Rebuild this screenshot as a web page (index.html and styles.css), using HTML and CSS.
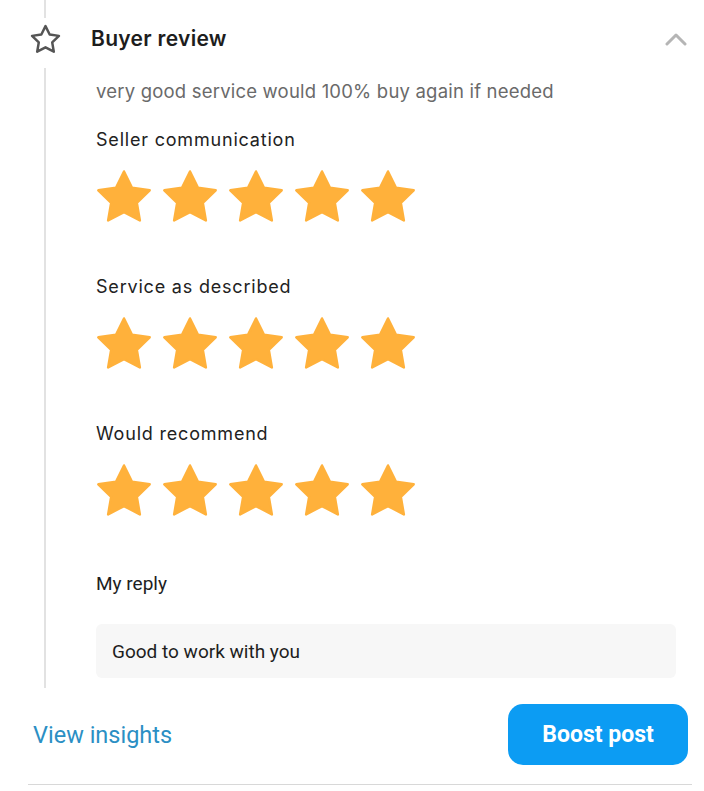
FILE: index.html
```html
<!DOCTYPE html>
<html>
<head>
<meta charset="utf-8">
<link rel="stylesheet" href="styles.css">
</head>
<body>
<div class="card">
  <div class="rail-top"></div>
  <div class="header">
    <svg class="head-icon" viewBox="0 0 24 24" width="35" height="35"><path d="M12 2.8l2.85 5.78 6.38.93-4.62 4.5 1.09 6.35L12 17.36l-5.7 3 1.09-6.35-4.62-4.5 6.38-.93z" fill="none" stroke="#555" stroke-width="1.7" stroke-linejoin="round"/></svg>
    <div class="title">Buyer review</div>
    <svg class="chev" viewBox="0 0 24 14" width="24" height="14"><path d="M3 12l9-9 9 9" fill="none" stroke="#b5b5b5" stroke-width="3" stroke-linecap="round" stroke-linejoin="round"/></svg>
  </div>
  <div class="body">
    <p class="review">very good service would 100% buy again if needed</p>
    <div class="section">
      <div class="label">Seller communication</div>
      <div class="stars">
        <svg viewBox="1.6 1.6 20.8 19.8" width="56" height="53"><path class="st" d="M12 2.5l3 6.1 6.6.95-4.8 4.67 1.14 6.6L12 17.7l-5.94 3.12 1.14-6.6-4.8-4.67 6.6-.95z"/></svg>
        <svg viewBox="1.6 1.6 20.8 19.8" width="56" height="53"><path class="st" d="M12 2.5l3 6.1 6.6.95-4.8 4.67 1.14 6.6L12 17.7l-5.94 3.12 1.14-6.6-4.8-4.67 6.6-.95z"/></svg>
        <svg viewBox="1.6 1.6 20.8 19.8" width="56" height="53"><path class="st" d="M12 2.5l3 6.1 6.6.95-4.8 4.67 1.14 6.6L12 17.7l-5.94 3.12 1.14-6.6-4.8-4.67 6.6-.95z"/></svg>
        <svg viewBox="1.6 1.6 20.8 19.8" width="56" height="53"><path class="st" d="M12 2.5l3 6.1 6.6.95-4.8 4.67 1.14 6.6L12 17.7l-5.94 3.12 1.14-6.6-4.8-4.67 6.6-.95z"/></svg>
        <svg viewBox="1.6 1.6 20.8 19.8" width="56" height="53"><path class="st" d="M12 2.5l3 6.1 6.6.95-4.8 4.67 1.14 6.6L12 17.7l-5.94 3.12 1.14-6.6-4.8-4.67 6.6-.95z"/></svg>
      </div>
    </div>
    <div class="section">
      <div class="label">Service as described</div>
      <div class="stars">
        <svg viewBox="1.6 1.6 20.8 19.8" width="56" height="53"><path class="st" d="M12 2.5l3 6.1 6.6.95-4.8 4.67 1.14 6.6L12 17.7l-5.94 3.12 1.14-6.6-4.8-4.67 6.6-.95z"/></svg>
        <svg viewBox="1.6 1.6 20.8 19.8" width="56" height="53"><path class="st" d="M12 2.5l3 6.1 6.6.95-4.8 4.67 1.14 6.6L12 17.7l-5.94 3.12 1.14-6.6-4.8-4.67 6.6-.95z"/></svg>
        <svg viewBox="1.6 1.6 20.8 19.8" width="56" height="53"><path class="st" d="M12 2.5l3 6.1 6.6.95-4.8 4.67 1.14 6.6L12 17.7l-5.94 3.12 1.14-6.6-4.8-4.67 6.6-.95z"/></svg>
        <svg viewBox="1.6 1.6 20.8 19.8" width="56" height="53"><path class="st" d="M12 2.5l3 6.1 6.6.95-4.8 4.67 1.14 6.6L12 17.7l-5.94 3.12 1.14-6.6-4.8-4.67 6.6-.95z"/></svg>
        <svg viewBox="1.6 1.6 20.8 19.8" width="56" height="53"><path class="st" d="M12 2.5l3 6.1 6.6.95-4.8 4.67 1.14 6.6L12 17.7l-5.94 3.12 1.14-6.6-4.8-4.67 6.6-.95z"/></svg>
      </div>
    </div>
    <div class="section">
      <div class="label">Would recommend</div>
      <div class="stars">
        <svg viewBox="1.6 1.6 20.8 19.8" width="56" height="53"><path class="st" d="M12 2.5l3 6.1 6.6.95-4.8 4.67 1.14 6.6L12 17.7l-5.94 3.12 1.14-6.6-4.8-4.67 6.6-.95z"/></svg>
        <svg viewBox="1.6 1.6 20.8 19.8" width="56" height="53"><path class="st" d="M12 2.5l3 6.1 6.6.95-4.8 4.67 1.14 6.6L12 17.7l-5.94 3.12 1.14-6.6-4.8-4.67 6.6-.95z"/></svg>
        <svg viewBox="1.6 1.6 20.8 19.8" width="56" height="53"><path class="st" d="M12 2.5l3 6.1 6.6.95-4.8 4.67 1.14 6.6L12 17.7l-5.94 3.12 1.14-6.6-4.8-4.67 6.6-.95z"/></svg>
        <svg viewBox="1.6 1.6 20.8 19.8" width="56" height="53"><path class="st" d="M12 2.5l3 6.1 6.6.95-4.8 4.67 1.14 6.6L12 17.7l-5.94 3.12 1.14-6.6-4.8-4.67 6.6-.95z"/></svg>
        <svg viewBox="1.6 1.6 20.8 19.8" width="56" height="53"><path class="st" d="M12 2.5l3 6.1 6.6.95-4.8 4.67 1.14 6.6L12 17.7l-5.94 3.12 1.14-6.6-4.8-4.67 6.6-.95z"/></svg>
      </div>
    </div>
    <div class="reply-label">My reply</div>
    <div class="reply-box">Good to work with you</div>
  </div>
  <div class="footer">
    <a class="insights">View insights</a>
    <button class="boost">Boost post</button>
  </div>
  <div class="rule"></div>
</div>
</body>
</html>
```

FILE: styles.css
```css
html, body {
  margin: 0;
  padding: 0;
  background: #fff;
}
.card {
  width: 704px;
  height: 791px;
  font-family: Inter, "Open Sans", sans-serif;
  color: #222;
}
.rail-top {
  margin-left: 44px;
  width: 0;
  height: 18px;
  border-left: 2px solid #e2e2e2;
}
.header {
  display: flex;
  align-items: center;
  height: 40px;
  padding: 0 14px 10px 28px;
}
.head-icon {
  display: block;
  flex: none;
  margin-top: 2px;
}
.title {
  margin-left: 28px;
  font-size: 21px;
  font-weight: 600;
  color: #1d1d1d;
  letter-spacing: 0.3px;
  flex: 1;
}
.chev {
  display: block;
  margin-right: 2px;
  margin-top: 2px;
}
.body {
  margin-left: 44px;
  border-left: 2px solid #e2e2e2;
  padding: 10px 28px 10px 50px;
}
.review {
  margin: 0;
  font-size: 18.5px;
  line-height: 26px;
  color: #6a6a6a;
  letter-spacing: 0.2px;
}
.section {
  margin-top: 22px;
}
.section + .section {
  margin-top: 51px;
}
.label {
  font-size: 18px;
  line-height: 28px;
  color: #222;
  letter-spacing: 0.8px;
}
.stars {
  display: flex;
  gap: 10px;
  margin-top: 14px;
  height: 54px;
  align-items: center;
}
.stars svg {
  display: block;
}
.st {
  fill: #FFB13B;
  stroke: #FFB13B;
  stroke-width: 0.9;
  stroke-linejoin: round;
}
.reply-label {
  margin-top: 54px;
  font-family: Roboto, sans-serif;
  font-size: 19px;
  line-height: 28px;
  color: #1e1e1e;
}
.reply-box {
  margin-top: 26px;
  height: 54px;
  box-sizing: border-box;
  padding-left: 16px;
  display: flex;
  align-items: center;
  background: #f7f7f7;
  border-radius: 6px;
  font-family: Roboto, sans-serif;
  font-size: 19px;
  color: #1e1e1e;
}
.footer {
  margin-top: 16px;
  display: flex;
  align-items: center;
  justify-content: space-between;
  padding-left: 33px;
  padding-right: 16px;
  height: 61px;
}
.insights {
  font-family: Roboto, sans-serif;
  font-size: 23.5px;
  color: #2b8fc4;
}
.boost {
  width: 180px;
  height: 61px;
  border: none;
  border-radius: 15px;
  background: #0c9cf3;
  color: #fff;
  font-family: Roboto, sans-serif;
  font-weight: 700;
  font-size: 23px;
  padding: 0;
}
.rule {
  margin: 19px 12px 0 28px;
  height: 1px;
  background: #d8d8d8;
}
```
